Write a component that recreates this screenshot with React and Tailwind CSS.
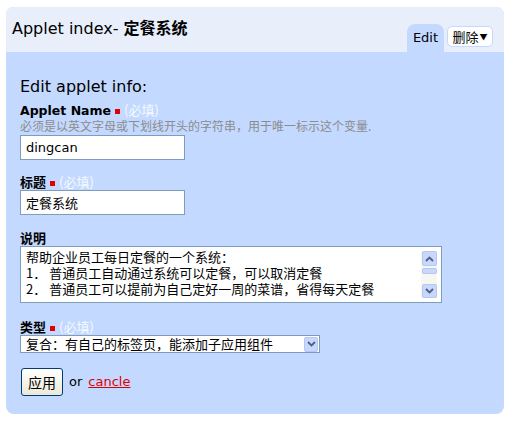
import React from 'react';

const sans = "font-['DejaVu_Sans','Noto_Sans_CJK_SC',sans-serif]";
const cjk = "font-['Noto_Sans_CJK_SC','DejaVu_Sans',sans-serif]";

function Chevron({ up }) {
    return (
        <svg width="9" height="6" viewBox="0 0 9 6">
            <path
                d={up ? 'M1 5 L4.5 1.5 L8 5' : 'M1 1 L4.5 4.5 L8 1'}
                fill="none"
                stroke="#4d6185"
                strokeWidth="1.8"
            />
        </svg>
    );
}

function Required() {
    return (
        <>
            <span className="inline-block w-[5px] h-[5px] bg-[#e00000] mx-[4px] align-middle" />
            <span className={`${cjk} font-normal text-[13px] text-[#f8faff]`}>(必填)</span>
        </>
    );
}

export default function App() {
    return (
        <div className={`w-[510px] h-[422px] bg-white pt-[7px] pl-[6px] ${sans}`}>
            <div className="w-[498px] h-[407px] rounded-[8px] overflow-hidden bg-[#c3d9ff] flex flex-col">
                {/* Header */}
                <div className="h-[45px] bg-[#e8eefa] flex items-end justify-between pl-[6px] pr-[11px] shrink-0">
                    <h1 className="self-start pt-[10px] text-[16px] leading-[20px] text-black">
                        Applet index- <span className={`${cjk} font-semibold`}>定餐系统</span>
                    </h1>
                    <div className="flex items-end gap-[3px]">
                        <div className="w-[37px] h-[28px] bg-[#c3d9ff] rounded-t-[8px] flex items-center justify-center text-[13px] text-black">
                            Edit
                        </div>
                        <div className={`w-[46px] h-[21px] mb-[5px] bg-white border border-[#c3d9ff] rounded-[5px] flex items-center justify-center gap-[1px] text-[13px] text-black ${cjk}`}>
                            删除<span className="text-[8px] leading-none">▼</span>
                        </div>
                    </div>
                </div>

                {/* Body */}
                <div className="px-[14px] pt-[22px] text-black">
                    <h2 className="text-[16px] leading-[22px] pt-[2px] -mb-[2px]">Edit applet info:</h2>

                    <div className="mt-[6px] text-[12.5px] leading-[16px] font-bold">
                        Applet Name<Required />
                    </div>
                    <div className={`${cjk} text-[12px] leading-[14px] text-[#8c8c8c]`}>
                        必须是以英文字母或下划线开头的字符串，用于唯一标示这个变量.
                    </div>
                    <div className="mt-[2px] w-[165px] h-[25px] bg-white border border-[#7f9db9] flex items-center px-[5px] text-[13px]">
                        dingcan
                    </div>

                    <div className={`${cjk} mt-[14px] text-[13px] leading-[16px] font-bold`}>
                        标题<Required />
                    </div>
                    <div className={`${cjk} w-[165px] h-[25px] bg-white border border-[#7f9db9] flex items-center px-[5px] text-[13px]`}>
                        定餐系统
                    </div>

                    <div className={`${cjk} mt-[15px] text-[13px] leading-[16px] font-bold`}>说明</div>
                    <div className="w-[422px] h-[57px] bg-white border border-[#7f9db9] flex">
                        <div className={`${cjk} flex-1 pl-[5px] pt-[2px] text-[13px] leading-[16px] whitespace-nowrap overflow-hidden`}>
                            <div>帮助企业员工每日定餐的一个系统：</div>
                            <div>1． 普通员工自动通过系统可以定餐，可以取消定餐</div>
                            <div>2． 普通员工可以提前为自己定好一周的菜谱，省得每天定餐</div>
                        </div>
                        <div className="w-[16px] my-[4px] mr-[4px] flex flex-col items-center bg-[#f7f6f1]">
                            <div className="w-[15px] h-[15px] rounded-[2px] bg-[#c8d7fb] border border-[#b4c8f6] flex items-center justify-center">
                                <Chevron up />
                            </div>
                            <div className="w-[15px] h-[6px] mt-[2px] rounded-[2px] bg-[#c8d7fb] border border-[#b4c8f6]" />
                            <div className="flex-1" />
                            <div className="w-[15px] h-[14px] rounded-[2px] bg-[#c8d7fb] border border-[#b4c8f6] flex items-center justify-center">
                                <Chevron />
                            </div>
                        </div>
                    </div>

                    <div className={`${cjk} mt-[16px] text-[13px] leading-[16px] font-bold`}>
                        类型<Required />
                    </div>
                    <div className="w-[300px] h-[18px] bg-white border border-[#7f9db9] flex items-center">
                        <div className={`${cjk} flex-1 pl-[5px] text-[13px] leading-[16px] whitespace-nowrap`}>
                            复合：有自己的标签页，能添加子应用组件
                        </div>
                        <div className="w-[14px] h-[15px] mr-[1px] rounded-[2px] bg-[#c8d7fb] border border-[#b4c8f6] flex items-center justify-center">
                            <Chevron />
                        </div>
                    </div>

                    <div className="mt-[15px] flex items-center gap-[6px] text-[13px]">
                        <button className={`${cjk} w-[42px] h-[28px] ml-[1px] rounded-[3px] border border-[#003c74] bg-gradient-to-b from-white to-[#ece9d8] text-[14px] text-black`}>
                            应用
                        </button>
                        <span>or</span>
                        <a className="text-[#e00000] underline">cancle</a>
                    </div>
                </div>
            </div>
        </div>
    );
}
